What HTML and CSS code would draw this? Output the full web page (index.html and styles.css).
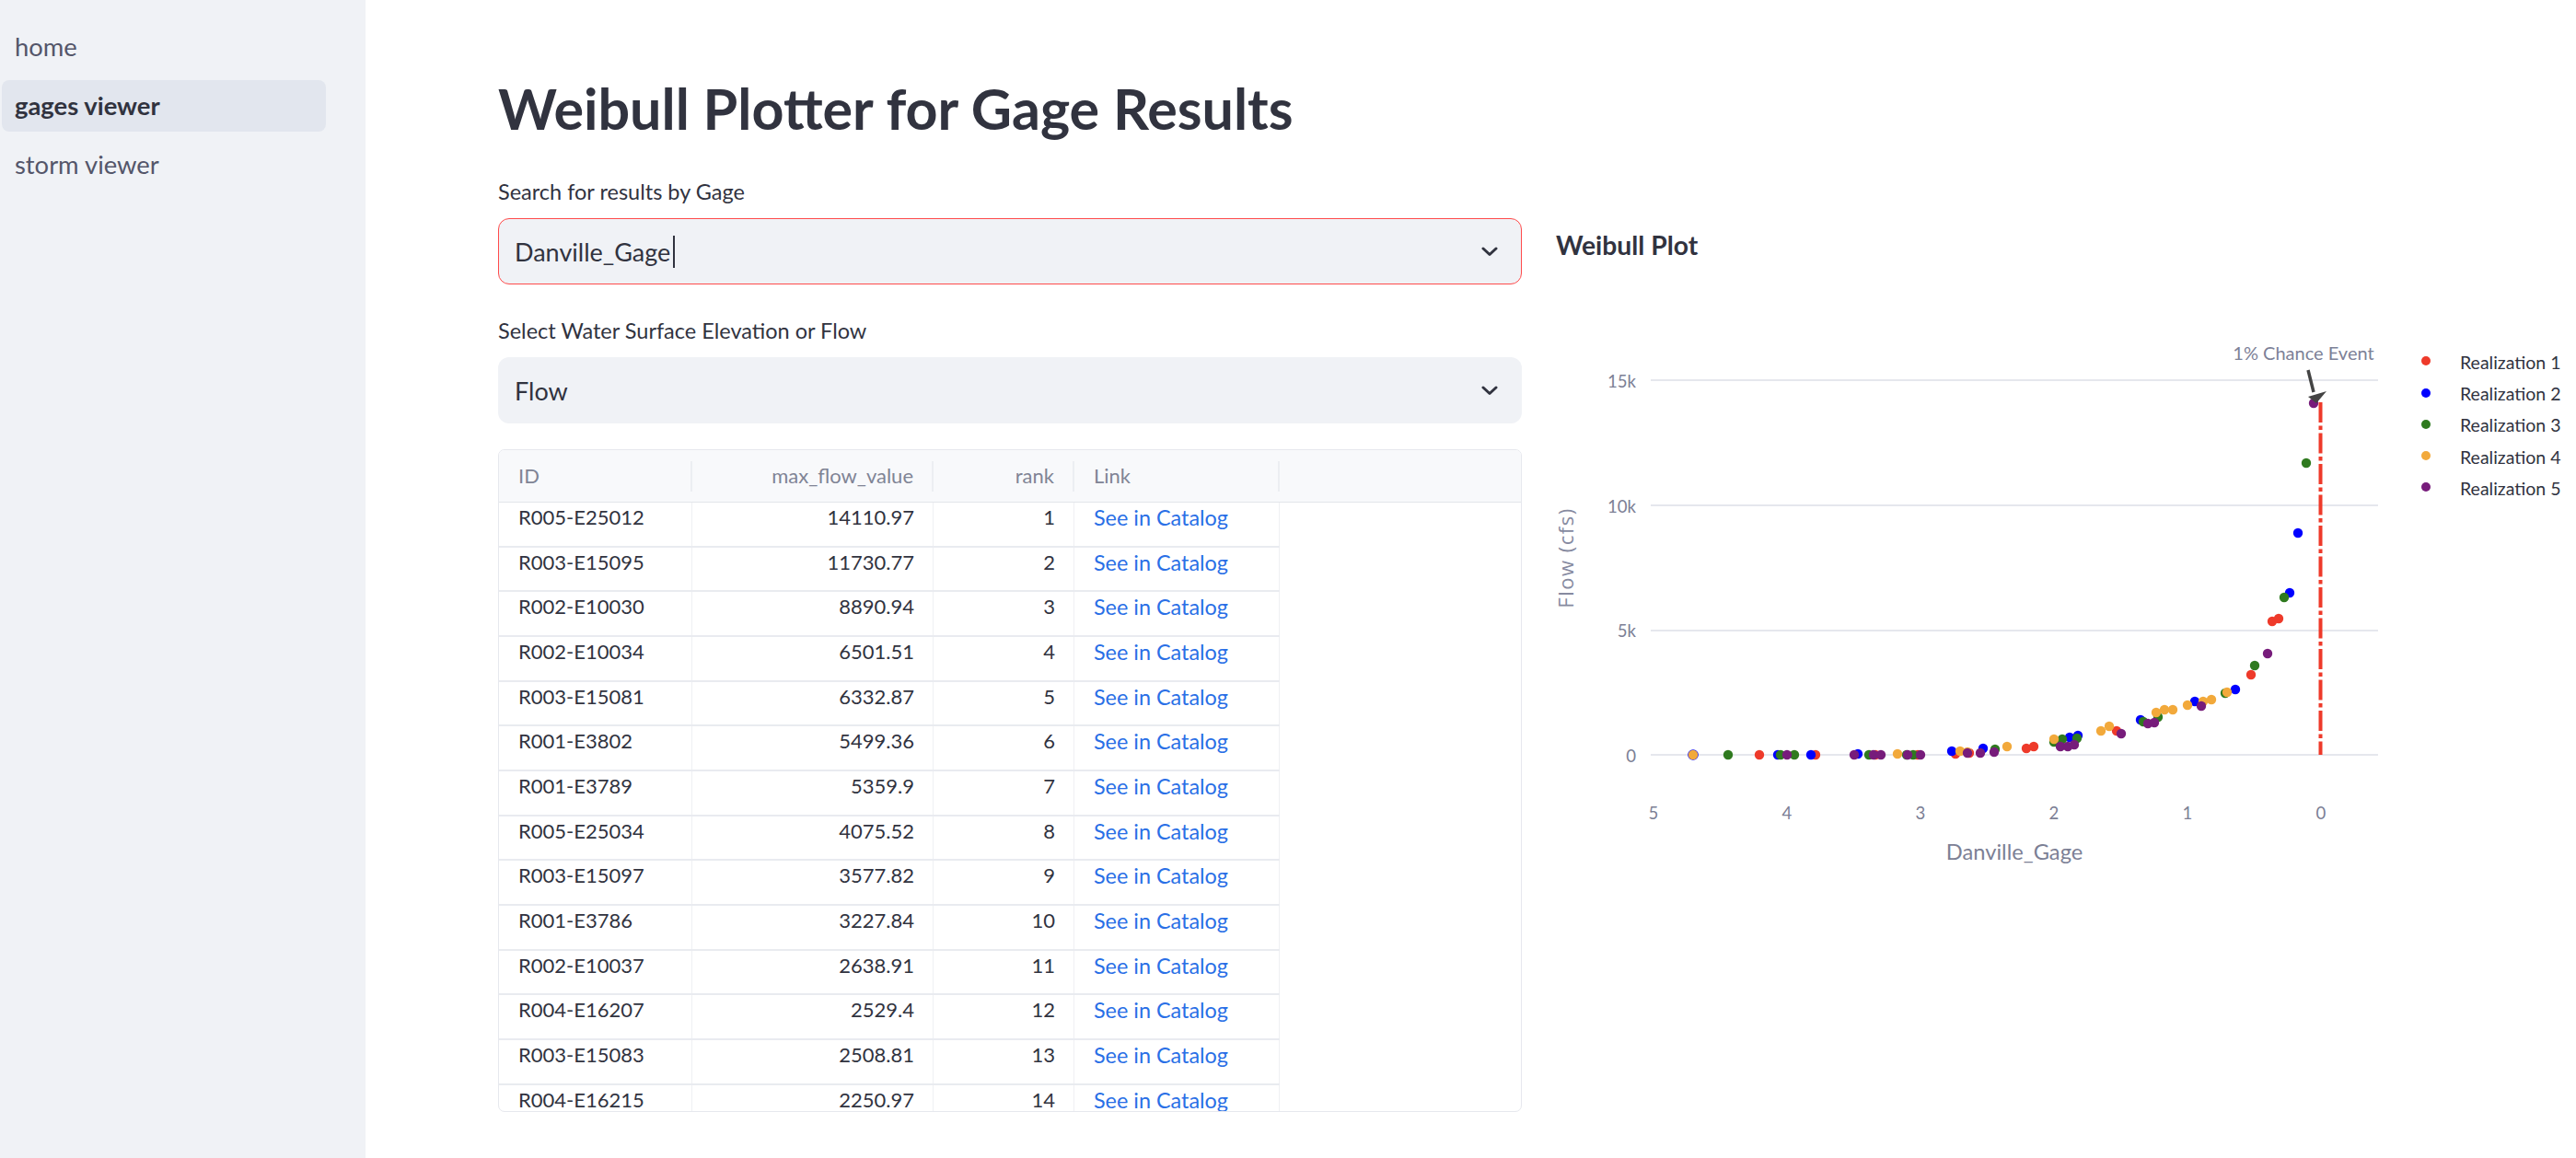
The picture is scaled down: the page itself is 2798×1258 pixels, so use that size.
FILE: index.html
```html
<!DOCTYPE html>
<html lang="en">
<head>
<meta charset="utf-8">
<title>Weibull Plotter for Gage Results</title>
<link rel="stylesheet" href="styles.css">
</head>
<body>
<aside class="sidebar">
  <nav class="nav">
    <a class="nav-item" href="#">home</a>
    <a class="nav-item active" href="#">gages viewer</a>
    <a class="nav-item" href="#">storm viewer</a>
  </nav>
</aside>
<main class="main">
  <h1 class="title">Weibull Plotter for Gage Results</h1>
  <div class="columns">
    <section class="left">
      <div class="label">Search for results by Gage</div>
      <div class="select focused">
        <span class="select-value">Danville_Gage<span class="caret"></span></span>
        <svg class="chevron" width="18" height="11" viewBox="0 0 18 11"><path d="M2 2 L9 8.5 L16 2" fill="none" stroke="#31333f" stroke-width="3" stroke-linecap="round" stroke-linejoin="round"/></svg>
      </div>
      <div class="label second">Select Water Surface Elevation or Flow</div>
      <div class="select">
        <span class="select-value">Flow</span>
        <svg class="chevron" width="18" height="11" viewBox="0 0 18 11"><path d="M2 2 L9 8.5 L16 2" fill="none" stroke="#31333f" stroke-width="3" stroke-linecap="round" stroke-linejoin="round"/></svg>
      </div>
      <div class="table">
        <div class="thead">
          <div class="th c1"><span class="tt">ID</span><span class="sep"></span></div>
          <div class="th c2"><span class="tt num">max_flow_value</span><span class="sep"></span></div>
          <div class="th c3"><span class="tt num">rank</span><span class="sep"></span></div>
          <div class="th c4"><span class="tt">Link</span><span class="sep"></span></div>
        </div>
        <div class="tbody">
          <div class="row"><div class="td c1">R005-E25012</div><div class="td c2 num">14110.97</div><div class="td c3 num">1</div><div class="td c4"><a href="#">See in Catalog</a></div></div>
          <div class="row"><div class="td c1">R003-E15095</div><div class="td c2 num">11730.77</div><div class="td c3 num">2</div><div class="td c4"><a href="#">See in Catalog</a></div></div>
          <div class="row"><div class="td c1">R002-E10030</div><div class="td c2 num">8890.94</div><div class="td c3 num">3</div><div class="td c4"><a href="#">See in Catalog</a></div></div>
          <div class="row"><div class="td c1">R002-E10034</div><div class="td c2 num">6501.51</div><div class="td c3 num">4</div><div class="td c4"><a href="#">See in Catalog</a></div></div>
          <div class="row"><div class="td c1">R003-E15081</div><div class="td c2 num">6332.87</div><div class="td c3 num">5</div><div class="td c4"><a href="#">See in Catalog</a></div></div>
          <div class="row"><div class="td c1">R001-E3802</div><div class="td c2 num">5499.36</div><div class="td c3 num">6</div><div class="td c4"><a href="#">See in Catalog</a></div></div>
          <div class="row"><div class="td c1">R001-E3789</div><div class="td c2 num">5359.9</div><div class="td c3 num">7</div><div class="td c4"><a href="#">See in Catalog</a></div></div>
          <div class="row"><div class="td c1">R005-E25034</div><div class="td c2 num">4075.52</div><div class="td c3 num">8</div><div class="td c4"><a href="#">See in Catalog</a></div></div>
          <div class="row"><div class="td c1">R003-E15097</div><div class="td c2 num">3577.82</div><div class="td c3 num">9</div><div class="td c4"><a href="#">See in Catalog</a></div></div>
          <div class="row"><div class="td c1">R001-E3786</div><div class="td c2 num">3227.84</div><div class="td c3 num">10</div><div class="td c4"><a href="#">See in Catalog</a></div></div>
          <div class="row"><div class="td c1">R002-E10037</div><div class="td c2 num">2638.91</div><div class="td c3 num">11</div><div class="td c4"><a href="#">See in Catalog</a></div></div>
          <div class="row"><div class="td c1">R004-E16207</div><div class="td c2 num">2529.4</div><div class="td c3 num">12</div><div class="td c4"><a href="#">See in Catalog</a></div></div>
          <div class="row"><div class="td c1">R003-E15083</div><div class="td c2 num">2508.81</div><div class="td c3 num">13</div><div class="td c4"><a href="#">See in Catalog</a></div></div>
          <div class="row"><div class="td c1">R004-E16215</div><div class="td c2 num">2250.97</div><div class="td c3 num">14</div><div class="td c4"><a href="#">See in Catalog</a></div></div>
        </div>
      </div>
    </section>
    <section class="right">
      <svg class="plot" width="1108" height="780" viewBox="0 0 1108 780">
        <text class="plot-title" x="0" y="89">Weibull Plot</text>
        <g class="grid">
          <line x1="103" y1="225" x2="893" y2="225"/>
          <line x1="103" y1="361" x2="893" y2="361"/>
          <line x1="103" y1="497" x2="893" y2="497"/>
          <line x1="103" y1="632" x2="893" y2="632"/>
        </g>
        <g class="ytick">
          <text x="87" y="233">15k</text>
          <text x="87" y="369">10k</text>
          <text x="87" y="504">5k</text>
          <text x="87" y="640">0</text>
        </g>
        <g class="xtick">
          <text x="106" y="702">5</text>
          <text x="251" y="702">4</text>
          <text x="396" y="702">3</text>
          <text x="541" y="702">2</text>
          <text x="686" y="702">1</text>
          <text x="831" y="702">0</text>
        </g>
        <text class="xtitle" x="498" y="746">Danville_Gage</text>
        <text class="ytitle" transform="translate(19 418) rotate(-90)">Flow (cfs)</text>
        <g class="pts red">
          <circle cx="221" cy="632" r="5.2"/><circle cx="282" cy="632" r="5.2"/><circle cx="347" cy="632" r="5.2"/><circle cx="393" cy="632" r="5.2"/>
          <circle cx="434" cy="631" r="5.2"/><circle cx="449" cy="630" r="5.2"/><circle cx="511" cy="625" r="5.2"/><circle cx="519" cy="623" r="5.2"/>
          <circle cx="609" cy="606" r="5.2"/><circle cx="755" cy="545" r="5.2"/><circle cx="778" cy="487" r="5.2"/><circle cx="785" cy="484" r="5.2"/>
        </g>
        <g class="pts blue">
          <circle cx="149" cy="632" r="5.8"/>
          <circle cx="241" cy="632" r="5.2"/><circle cx="277" cy="632" r="5.2"/><circle cx="328" cy="631" r="5.2"/><circle cx="430" cy="628" r="5.2"/>
          <circle cx="464" cy="625" r="5.2"/><circle cx="558" cy="613" r="5.2"/><circle cx="567" cy="611" r="5.2"/><circle cx="635" cy="594" r="5.2"/>
          <circle cx="694" cy="574" r="5.2"/><circle cx="738" cy="561" r="5.2"/><circle cx="797" cy="456" r="5.2"/><circle cx="806" cy="391" r="5.2"/>
        </g>
        <g class="pts green">
          <circle cx="187" cy="632" r="5.2"/><circle cx="244" cy="632" r="5.2"/><circle cx="259" cy="632" r="5.2"/><circle cx="340" cy="632" r="5.2"/>
          <circle cx="381" cy="632" r="5.2"/><circle cx="388" cy="632" r="5.2"/><circle cx="477" cy="626" r="5.2"/><circle cx="541" cy="618" r="5.2"/>
          <circle cx="550" cy="615" r="5.2"/><circle cx="566" cy="614" r="5.2"/><circle cx="638" cy="596" r="5.2"/><circle cx="654" cy="591" r="5.2"/>
          <circle cx="727" cy="565" r="5.2"/><circle cx="759" cy="535" r="5.2"/><circle cx="791" cy="461" r="5.2"/><circle cx="815" cy="315" r="5.2"/>
        </g>
        <g class="pts orange">
          <circle cx="149" cy="632" r="5.2"/><circle cx="371" cy="631" r="5.2"/><circle cx="439" cy="628" r="5.2"/><circle cx="447" cy="629" r="5.2"/>
          <circle cx="490" cy="623" r="5.2"/><circle cx="541" cy="615" r="5.2"/><circle cx="592" cy="606" r="5.2"/><circle cx="601" cy="601" r="5.2"/>
          <circle cx="652" cy="586" r="5.2"/><circle cx="661" cy="583" r="5.2"/><circle cx="670" cy="583" r="5.2"/><circle cx="686" cy="578" r="5.2"/>
          <circle cx="703" cy="574" r="5.2"/><circle cx="712" cy="572" r="5.2"/><circle cx="729" cy="564" r="5.2"/>
        </g>
        <g class="pts purple">
          <circle cx="251" cy="632" r="5.2"/><circle cx="324" cy="632" r="5.2"/><circle cx="345" cy="632" r="5.2"/><circle cx="353" cy="632" r="5.2"/>
          <circle cx="382" cy="632" r="5.2"/><circle cx="396" cy="632" r="5.2"/><circle cx="447" cy="630" r="5.2"/><circle cx="461" cy="630" r="5.2"/>
          <circle cx="476" cy="629" r="5.2"/><circle cx="548" cy="623" r="5.2"/><circle cx="556" cy="623" r="5.2"/><circle cx="563" cy="621" r="5.2"/>
          <circle cx="614" cy="609" r="5.2"/><circle cx="643" cy="598" r="5.2"/><circle cx="650" cy="597" r="5.2"/><circle cx="701" cy="579" r="5.2"/>
          <circle cx="773" cy="522" r="5.2"/><circle cx="823" cy="250" r="5.2"/>
        </g>
        <line class="event-line" x1="830.5" y1="249" x2="830.5" y2="632"/>
        <text class="annot" x="812" y="203">1% Chance Event</text>
        <line class="arrow" x1="817" y1="214" x2="823" y2="238"/>
        <path class="arrowhead" d="M826 250 L817 243 L837 237 Z"/>
        <g class="legend">
          <circle class="red" cx="945" cy="204" r="5"/><text x="982" y="212.5">Realization 1</text>
          <circle class="blue" cx="945" cy="239" r="5"/><text x="982" y="247">Realization 2</text>
          <circle class="green" cx="945" cy="273" r="5"/><text x="982" y="281">Realization 3</text>
          <circle class="orange" cx="945" cy="307" r="5"/><text x="982" y="315.5">Realization 4</text>
          <circle class="purple" cx="945" cy="341" r="5"/><text x="982" y="349.5">Realization 5</text>
        </g>
      </svg>
    </section>
  </div>
</main>
</body>
</html>
```
FILE: styles.css
```css
* { box-sizing: border-box; }
html, body { margin: 0; padding: 0; }
body {
  width: 2798px;
  height: 1258px;
  overflow: hidden;
  display: flex;
  background: #ffffff;
  color: #31333f;
  font-family: Lato, "Noto Sans", sans-serif;
}

/* sidebar */
.sidebar {
  flex: none;
  width: 397px;
  background: #f0f2f6;
  padding: 23px 43px 0 2px;
}
.nav { display: flex; flex-direction: column; gap: 8px; }
.nav-item {
  display: block;
  height: 56px;
  line-height: 56px;
  padding-left: 14px;
  border-radius: 8px;
  font-size: 27.4px;
  color: #54566a;
  text-decoration: none;
}
.nav-item.active {
  background: #e2e6ee;
  color: #31333f;
  font-weight: 700;
}

/* main */
.main {
  flex: 1;
  padding: 78px 0 0 144px;
}
.title {
  margin: 0 0 30px;
  height: 80px;
  line-height: 80px;
  font-size: 61px;
  font-weight: 700;
  color: #31333f;
  white-space: nowrap;
}
.columns { display: flex; gap: 37px; }
.left { flex: none; width: 1112px; }
.right { flex: none; width: 1108px; }

.label {
  font-size: 23.5px;
  line-height: 40px;
  height: 40px;
  margin-bottom: 9px;
  color: #31333f;
}
.label.second { margin-top: 30px; }

.select {
  height: 72px;
  border-radius: 12px;
  background: #f0f2f6;
  border: 1px solid transparent;
  display: flex;
  align-items: center;
  justify-content: space-between;
  padding: 0 25px 0 17px;
  font-size: 27px;
  color: #31333f;
}
.select.focused { border-color: #ff4b4b; }
.select-value { display: flex; align-items: center; }
.caret {
  display: inline-block;
  width: 1.5px;
  height: 35px;
  margin-left: 3px;
  background: #31333f;
}
.chevron { display: block; flex: none; }

/* table */
.table {
  margin-top: 28px;
  height: 720px;
  border: 1px solid #e6e8ee;
  border-radius: 7px;
  overflow: hidden;
  font-size: 22px;
}
.thead {
  display: flex;
  height: 57px;
  background: #f8f9fb;
  border-bottom: 1px solid #e3e5ea;
  color: #808495;
}
.th {
  display: flex;
  align-items: center;
  line-height: 56px;
}
.tt { flex: 1; padding: 0 20px 0 21px; white-space: nowrap; }
.sep {
  flex: none;
  width: 2px;
  height: 33px;
  background: #eceef2;
}
.c1 { width: 210px; flex: none; }
.c2 { width: 262px; flex: none; }
.c3 { width: 153px; flex: none; }
.c4 { width: 223px; flex: none; }
.num { text-align: right; }

.row {
  display: flex;
  width: 848px;
  height: 48.67px;
  border-bottom: 2px solid #e9ebf0;
}
.td {
  border-right: 1px solid #eff0f3;
  padding: 2px 20px 0 21px;
  line-height: 28px;
  white-space: nowrap;
  color: #31333f;
}
.td a { color: #2a6fe6; text-decoration: none; font-size: 23.4px; }

/* plot */
.plot { display: block; overflow: visible; font-family: Lato, "Noto Sans", sans-serif; }
.plot-title { font-size: 28.3px; font-weight: 700; fill: #31333f; }
.grid line { stroke: #e5e7ed; stroke-width: 2; }
.ytick text { font-size: 18.6px; fill: #7c8095; text-anchor: end; }
.xtick text { font-size: 18.6px; fill: #7c8095; text-anchor: middle; }
.xtitle { font-size: 23.7px; fill: #7c8095; text-anchor: middle; }
.ytitle { font-family: "Open Sans", "Noto Sans", sans-serif; font-size: 22px; letter-spacing: 1.5px; fill: #868aa0; text-anchor: middle; }
.red { fill: #ee3a2a; }
.blue { fill: #0000ff; }
.green { fill: #2f7a1f; }
.orange { fill: #f2a93b; }
.purple { fill: #771c7b; }
.event-line {
  stroke: #ee3a2a;
  stroke-width: 4;
  stroke-dasharray: 22 3.5 4.5 3.5;
}
.annot { font-size: 20px; fill: #7d8197; text-anchor: middle; }
.arrow { stroke: #444444; stroke-width: 3.5; }
.arrowhead { fill: #444444; }
.legend text { font-size: 19.5px; fill: #31333f; }
```
